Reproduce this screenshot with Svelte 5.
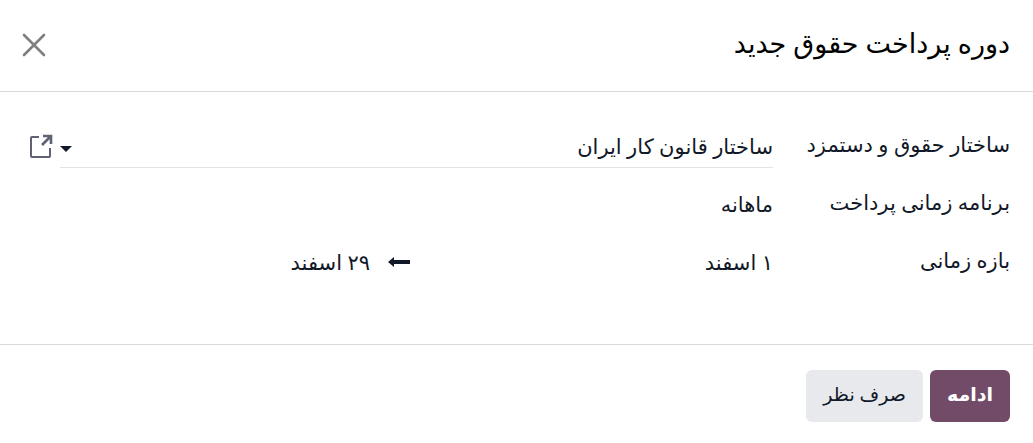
<script>
	let structure = $state("iran");
	const structures = [{ id: "iran", name: "ساختار قانون کار ایران" }];
	const schedule = "ماهانه";
	const period = { start: "۱ اسفند", end: "۲۹ اسفند" };
</script>

<div class="dialog" dir="rtl" lang="fa" role="dialog" aria-labelledby="title">
	<header>
		<h1 id="title">دوره پرداخت حقوق جدید</h1>
		<button class="close" type="button" aria-label="بستن">
			<svg width="24" height="24" viewBox="0 0 24 24"><path d="M2 2l20 20M22 2L2 22" /></svg>
		</button>
	</header>

	<main>
		<label for="structure">ساختار حقوق و دستمزد</label>
		<div class="picker">
			<div class="select">
				<select id="structure" bind:value={structure}>
					{#each structures as s}
						<option value={s.id}>{s.name}</option>
					{/each}
				</select>
				<svg class="caret" width="12" height="6" viewBox="0 0 12 6"><path d="M0 0h12L6 6z" /></svg>
			</div>
			<button class="open" type="button" aria-label="باز کردن">
				<svg width="24" height="24" viewBox="0 0 24 24">
					<path d="M10 3H3Q2 3 2 4V22Q2 23 3 23H20Q21 23 21 22V14" />
					<path class="arrow" d="M14 2H22V10M21 3L13 11" />
				</svg>
			</button>
		</div>

		<span class="label">برنامه زمانی پرداخت</span>
		<span class="value">{schedule}</span>

		<span class="label">بازه زمانی</span>
		<div class="range">
			<span>{period.start}</span>
			<span class="end">
				<svg width="22" height="12" viewBox="0 0 22 12"><path d="M0 6l6-5v3h16v4H6v3z" /></svg>
				{period.end}
			</span>
		</div>
	</main>

	<footer>
		<button class="primary" type="button">ادامه</button>
		<button class="secondary" type="button">صرف نظر</button>
	</footer>
</div>

<style>
	.dialog {
		font-family: "Noto Sans", "DejaVu Sans", sans-serif;
		font-size: 21px;
		line-height: 36px;
		color: #111827;
		background: white;
	}

	button, select {
		font: inherit;
		border: 0;
		padding: 0;
		background: none;
		color: inherit;
	}

	button {
		cursor: pointer;
	}

	svg {
		display: block;
		fill: #111827;
	}

	header {
		display: flex;
		justify-content: space-between;
		align-items: center;
		padding: 25px 23px 26px 22px;
		border-bottom: 1px solid #d8dadd;
	}

	h1 {
		margin: 0;
		padding-bottom: 4px;
		font-size: 27px;
		font-weight: 500;
		line-height: 36px;
		color: black;
	}

	.close svg {
		fill: none;
		stroke: #7f7f7f;
		stroke-width: 2.6;
		stroke-linecap: round;
	}

	main {
		display: grid;
		grid-template-columns: 213px 1fr;
		grid-auto-rows: 40px;
		gap: 18px 24px;
		padding: 36px 23px 60px 29px;
	}

	label, .label {
		font-weight: 500;
		line-height: 32px;
	}

	.picker {
		display: flex;
		gap: 7px;
	}

	.select {
		position: relative;
		flex: 1;
		height: 39px;
		border-bottom: 1px solid #e3e4e6;
	}

	select {
		display: block;
		width: 100%;
		height: 36px;
		appearance: none;
	}

	.caret {
		position: absolute;
		left: 0;
		top: 18px;
	}

	.open {
		height: 36px;
	}

	.open svg {
		fill: none;
		stroke: #5f6272;
		stroke-width: 2;
	}

	.open .arrow {
		stroke-width: 2.6;
	}

	.range {
		display: grid;
		grid-template-columns: 1fr 1fr;
		padding-left: 18px;
	}

	.end {
		display: flex;
		align-items: center;
		gap: 18px;
		height: 36px;
	}

	footer {
		display: flex;
		gap: 7px;
		padding: 25px 23px 21px;
		border-top: 1px solid #d8dadd;
	}

	footer button {
		padding: 6px 17px 10px;
		border-radius: 6px;
		font-size: 19px;
	}

	.primary {
		background: #714b67;
		color: white;
		font-weight: 700;
	}

	.secondary {
		background: #e7e9ed;
	}
</style>
